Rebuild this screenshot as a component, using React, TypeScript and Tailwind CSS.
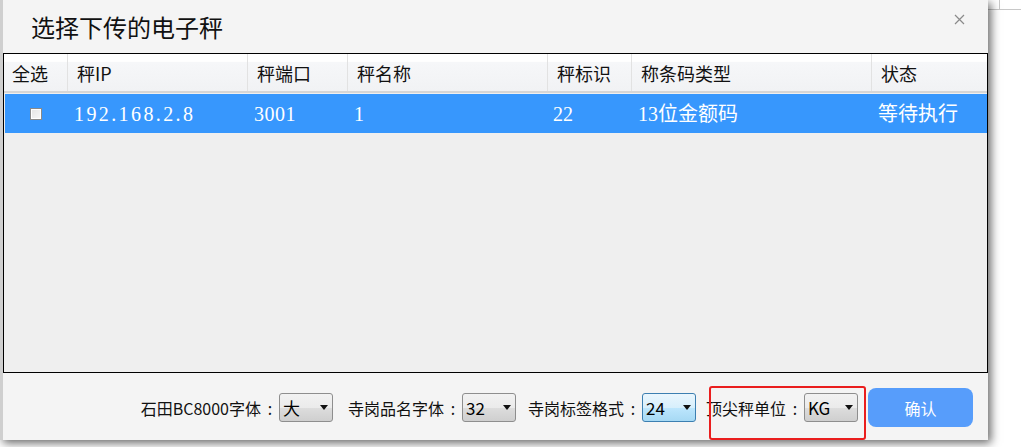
import React from "react";

const cjk = "font-['Noto_Sans_CJK_SC',sans-serif]";
const simsun = "font-['Liberation_Serif','Noto_Sans_CJK_SC',serif]";

const columns = [
  { title: "全选", w: "w-[64px]" },
  { title: "秤IP", w: "w-[180px]" },
  { title: "秤端口", w: "w-[100px]" },
  { title: "秤名称", w: "w-[200px]" },
  { title: "秤标识", w: "w-[84px]" },
  { title: "称条码类型", w: "w-[240px]" },
  { title: "状态", w: "flex-1" },
];

const Select = ({ value, focused }: { value: string; focused?: boolean }) => (
  <div
    className={`flex h-[29px] w-[54px] items-center justify-between rounded-[3px] border pl-[3px] pr-[4px] ${
      focused
        ? "border-[#3c7fb1] bg-[linear-gradient(#eaf6fd,#d7effc_50%,#bde6fd_51%,#a6d9f4)]"
        : "border-[#8e8e8e] bg-[linear-gradient(#f2f2f2,#ebebeb_50%,#dddddd_51%,#cfcfcf)]"
    }`}
  >
    <span className={`${cjk} text-[17px] leading-none text-black`}>{value}</span>
    <svg width="8" height="5" viewBox="0 0 8 5">
      <path d="M0 0h8L4 5z" fill="#111" />
    </svg>
  </div>
);

const Label = ({ text, className = "" }: { text: string; className?: string }) => (
  <span className={`flex whitespace-nowrap ${className}`}>
    {text}
    <span className="w-[18px] text-center">:</span>
  </span>
);

export default function App() {
  return (
    <div className="relative flex h-[447px] w-[1021px] overflow-hidden bg-white">
      <div className="relative z-10 flex h-[440px] w-[988px] shrink-0 flex-col border-l-[3px] border-[#cfcfcf] bg-[#f4f4f4] shadow-[3px_3px_9px_rgba(0,0,0,0.6)]">
        {/* title */}
        <div className="flex h-[53px] items-center justify-between pl-[28px] pr-[23px]">
          <span className={`${cjk} text-[24px] leading-none text-[#111]`}>选择下传的电子秤</span>
          <svg width="11" height="11" viewBox="0 0 11 11" className="mb-[14px]">
            <path d="M1 1l9 9M10 1l-9 9" stroke="#8a8a8a" strokeWidth="1.2" />
          </svg>
        </div>

        {/* table */}
        <div className="flex h-[320px] flex-col border border-black bg-[#efefef]">
          <div className="flex h-[39px] border-b-2 border-[#d6d6d6] bg-[linear-gradient(#ffffff,#ffffff_20%,#f6f7f9_22%,#f1f2f4)]">
            {columns.map((c, i) => (
              <div
                key={c.title}
                className={`${c.w} flex items-center ${i < columns.length - 1 ? "border-r border-[#e2e2e2]" : ""} ${
                  i === 0 ? "pl-[8px]" : "pl-[9px]"
                }`}
              >
                <span className={`${cjk} text-[18px] leading-none text-[#111]`}>{c.title}</span>
              </div>
            ))}
          </div>
          <div className="ml-[1px] mt-[1px] flex h-[39px] items-center bg-[#3797fd] text-white">
            <div className="flex w-[63px] justify-center pr-[2px]">
              <div className="h-[12px] w-[12px] border border-[#8a8a8a] bg-[linear-gradient(135deg,#e4e4e4,#f8f8f8)] shadow-[inset_0_0_0_1px_#ffffff]" />
            </div>
            <div className={`${simsun} w-[180px] pl-[6px] text-[20px] tracking-[2.4px]`}>192.168.2.8</div>
            <div className={`${simsun} w-[100px] pl-[6px] text-[20px] tracking-[0.5px]`}>3001</div>
            <div className={`${simsun} w-[200px] pl-[6px] text-[20px]`}>1</div>
            <div className={`${simsun} w-[84px] pl-[5px] text-[20px]`}>22</div>
            <div className={`${simsun} w-[240px] pl-[6px] text-[20px]`}>13位金额码</div>
            <div className={`${simsun} flex-1 pl-[6px] text-[20px]`}>等待执行</div>
          </div>
        </div>

        {/* footer */}
        <div className={`${cjk} flex flex-1 items-center justify-end pr-[15px] pt-[2px] text-[16px] text-[#111]`}>
          <Label text="石田BC8000字体" />
          <Select value="大" />
          <Label text="寺岗品名字体" className="ml-[15px]" />
          <Select value="32" />
          <Label text="寺岗标签格式" className="ml-[12px]" />
          <Select value="24" focused />
          <Label text="顶尖秤单位" className="ml-[10px]" />
          <Select value="KG" />
          <button className="ml-[10px] h-[39px] w-[105px] rounded-[8px] bg-[#579dfb] text-[16px] text-white">
            确认
          </button>
        </div>

        {/* annotation */}
        <div className="absolute left-[706px] top-[386px] h-[54px] w-[157px] rounded-[3px] border-2 border-[#ea1e1e]" />
      </div>
      <div className="flex-1">
        <div className="h-[10px] border-b border-[#c8c8c8]">
          <div className="h-full w-[12px] border-r border-[#c8c8c8]" />
        </div>
      </div>
    </div>
  );
}
